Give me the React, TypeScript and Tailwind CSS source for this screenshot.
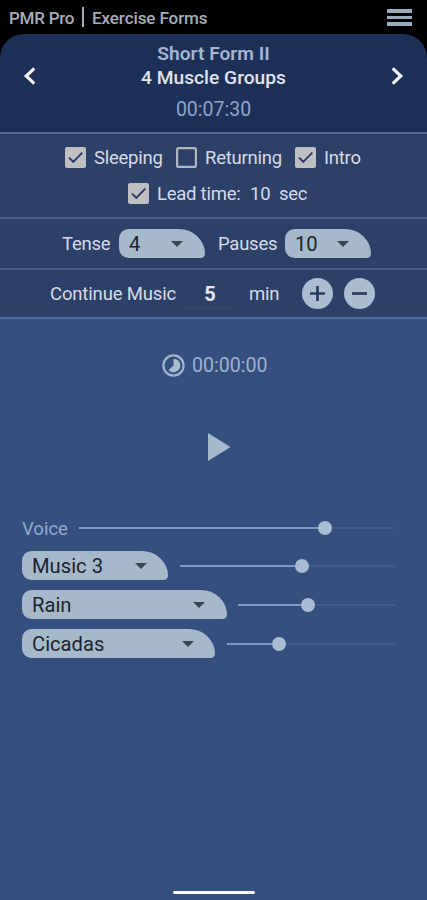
import { useState } from "react";
import clsx from "clsx";

const tracks = [
  { name: "Voice", picker: false, box: "w-[57px]", gap: "", height: "h-[33px]", value: 246, total: 316 },
  { name: "Music 3", picker: true, box: "w-[146px] pr-[21px]", gap: "ml-[12px]", height: "h-[39px]", value: 122, total: 215 },
  { name: "Rain", picker: true, box: "w-[205px] pr-[22px]", gap: "ml-[11px]", height: "h-[39px]", value: 70, total: 157 },
  { name: "Cicadas", picker: true, box: "w-[193px] pr-[21px]", gap: "ml-[12px]", height: "h-[39px]", value: 52, total: 168 },
];

function Chevron({ flip = false }: { flip?: boolean }) {
  return (
    <svg width="13" height="18" viewBox="0 0 13 18" className={flip ? "rotate-180" : ""}>
      <path d="M11.3 1.3 3.2 9l8.1 7.7" fill="none" stroke="#f0f1f4" strokeWidth="3.2" />
    </svg>
  );
}

function Check({ label, on, width, onToggle }: { label: string; on: boolean; width: string; onToggle: () => void }) {
  return (
    <button onClick={onToggle} className="flex items-center">
      <svg width="21" height="21" viewBox="0 0 21 21" className="mr-[8px] shrink-0">
        {on ? (
          <>
            <rect width="21" height="21" rx="2" fill="#bdbfc3" />
            <path d="m4 10.6 4.3 4.2L17.3 5.6" fill="none" stroke="#2c3a66" strokeWidth="1.9" />
          </>
        ) : (
          <rect x="1.1" y="1.1" width="18.8" height="18.8" rx="1.5" fill="none" stroke="#b0b6c1" strokeWidth="2.2" />
        )}
      </svg>
      <span className={clsx("whitespace-nowrap pt-[2px] text-left", width)}>{label}</span>
    </button>
  );
}

function Picker({ label, className }: { label: string; className: string }) {
  return (
    <button className={clsx("flex h-[29px] shrink-0 items-center justify-between rounded-[11px] rounded-tr-[30px_28px] rounded-br-[5px] bg-[#a6b9cb] pl-[10px] text-[20.2px] text-[#1c232c]", className)}>
      <span className="whitespace-nowrap pt-[2px]">{label}</span>
      <svg width="12" height="6" viewBox="0 0 12 6">
        <path d="M0 0h12L6 6z" fill="#3b4654" />
      </svg>
    </button>
  );
}

function Slider({ value, total }: { value: number; total: number }) {
  return (
    <div className="flex h-[14px] items-center" style={{ width: total }}>
      <div className="h-[2px] bg-[#7f9cc4]" style={{ width: value - 7 }} />
      <div className="size-[14px] shrink-0 rounded-full bg-[#a7bdd3]" />
      <div className="h-[2px] flex-1 bg-[#405b89]" />
    </div>
  );
}

export default function App() {
  const [checks, setChecks] = useState({ sleeping: true, returning: false, intro: true, lead: true });
  const [minutes, setMinutes] = useState(5);
  const toggle = (key: keyof typeof checks) => setChecks({ ...checks, [key]: !checks[key] });

  return (
    <div className="flex h-[900px] w-[427px] flex-col overflow-hidden bg-black font-[Roboto,sans-serif] text-[18px] leading-none text-[#d5dbe7]">
      <header className="flex h-[34px] shrink-0 items-center pl-[9px] pr-[15px] text-[17px] font-medium text-[#a5adb9]">
        <span className="w-[73px] whitespace-nowrap pt-[3px] tracking-[-0.25px]">PMR Pro</span>
        <span className="h-[20px] w-[2px] bg-[#a5adb9]" />
        <span className="ml-[8px] whitespace-nowrap pt-[3px] tracking-[-0.08px]">Exercise Forms</span>
        <button className="ml-auto flex flex-col gap-[3px] pt-px" aria-label="Menu">
          <span className="h-[3.5px] w-[25px] bg-[#9caabd]" />
          <span className="h-[3.5px] w-[25px] bg-[#9caabd]" />
          <span className="h-[3.5px] w-[25px] bg-[#9caabd]" />
        </button>
      </header>

      <section className="flex h-[98px] shrink-0 justify-between rounded-t-[24px] bg-[#1d3058] px-[23px] pt-[33px]">
        <button className="h-[18px]" aria-label="Previous"><Chevron /></button>
        <div className="-mt-[25px] flex flex-col items-center">
          <h1 className="h-[24px] text-[19.2px] font-semibold leading-[24px] text-[#a5b5d3]">Short Form II</h1>
          <p className="h-[24px] text-[19.2px] font-medium leading-[24px] text-[#e2e4ec]">4 Muscle Groups</p>
          <p className="mt-[8px] text-[19.5px] leading-[24px] text-[#91a4c8]">00:07:30</p>
        </div>
        <button className="h-[18px]" aria-label="Next"><Chevron flip /></button>
      </section>

      <section className="flex h-[85px] shrink-0 flex-col border-t-2 border-[#526890] bg-[#2d4067] pt-[12px] text-[18.5px] tracking-[-0.25px]">
        <div className="flex h-[22px] items-center pl-[65px]">
          <Check label="Sleeping" on={checks.sleeping} width="w-[82px]" onToggle={() => toggle("sleeping")} />
          <Check label="Returning" on={checks.returning} width="w-[90px]" onToggle={() => toggle("returning")} />
          <Check label="Intro" on={checks.intro} width="w-[42px]" onToggle={() => toggle("intro")} />
        </div>
        <div className="mt-[14px] flex h-[22px] items-center pl-[128px]">
          <Check label="Lead time:" on={checks.lead} width="w-[93px]" onToggle={() => toggle("lead")} />
          <span className="w-[29px] pt-[2px]">10</span>
          <span className="pt-[2px]">sec</span>
        </div>
      </section>

      <section className="flex h-[51px] shrink-0 items-center border-t-2 border-[#485d88] bg-[#2d4067] pl-[62px] text-[18.5px]">
        <span className="w-[57px] pt-px tracking-[-0.25px]">Tense</span>
        <Picker label="4" className="w-[86px] pr-[22px]" />
        <span className="ml-[13px] w-[67px] pt-px tracking-[-0.25px]">Pauses</span>
        <Picker label="10" className="w-[86px] pr-[22px]" />
      </section>

      <section className="flex h-[49px] shrink-0 items-center border-t-2 border-[#485d88] bg-[#2d4067] pl-[50px] text-[18.5px]">
        <span className="w-[133px] whitespace-nowrap pt-[2px] tracking-[-0.15px]">Continue Music</span>
        <span className="flex h-[28px] w-[54px] items-center justify-center border-b border-[#424563] pt-[2px] text-[20px] font-bold text-[#e5e8ef]">{minutes}</span>
        <span className="ml-[12px] w-[53px] pt-[2px] tracking-[-0.2px]">min</span>
        <button onClick={() => setMinutes(minutes + 1)} aria-label="More">
          <svg width="31" height="31" viewBox="0 0 31 31">
            <circle cx="15.5" cy="15.5" r="15.5" fill="#abbdd0" />
            <path d="M8 15.5h15M15.5 8v15" stroke="#2b3c63" strokeWidth="2.7" />
          </svg>
        </button>
        <button onClick={() => setMinutes(Math.max(0, minutes - 1))} className="ml-[11px]" aria-label="Less">
          <svg width="31" height="31" viewBox="0 0 31 31">
            <circle cx="15.5" cy="15.5" r="15.5" fill="#abbdd0" />
            <path d="M8 15.5h15" stroke="#2b3c63" strokeWidth="2.7" />
          </svg>
        </button>
      </section>

      <main className="flex flex-1 flex-col border-t-2 border-[#526b98] bg-[#35507f]">
        <div className="mt-[34px] flex h-[24px] items-center pl-[162px] text-[19.6px] text-[#9db2cf]">
          <svg width="23" height="23" viewBox="0 0 23 23" className="mr-[7px]">
            <circle cx="11.5" cy="11.5" r="10.1" fill="none" stroke="#9fb5cd" strokeWidth="2.2" />
            <path d="M11.5 4.7a6.8 6.8 0 1 1-5 11.4l5-4.6z" fill="#a7bdd0" />
          </svg>
          <span className="pt-[2px]">00:00:00</span>
        </div>
        <button className="ml-[208px] mt-[56px] h-[28px] w-[23px]" aria-label="Play">
          <svg width="23" height="28" viewBox="0 0 23 28">
            <path d="M0 0v28l22.5-14z" fill="#a4b9cb" />
          </svg>
        </button>
        <div className="mt-[52px] flex flex-col pl-[22px]">
          {tracks.map((t) => (
            <div key={t.name} className={clsx("flex items-center", t.height)}>
              {t.picker ? (
                <Picker label={t.name} className={t.box} />
              ) : (
                <span className={clsx("text-[18.5px] text-[#91a8c9]", t.box)}>{t.name}</span>
              )}
              <div className={clsx(t.gap, !t.picker && "-mt-[3px]")}>
                <Slider value={t.value} total={t.total} />
              </div>
            </div>
          ))}
        </div>
        <div className="mb-[6px] mt-auto ml-[173px] h-[3px] w-[82px] rounded-full bg-[#f5f8fc]" />
      </main>
    </div>
  );
}
